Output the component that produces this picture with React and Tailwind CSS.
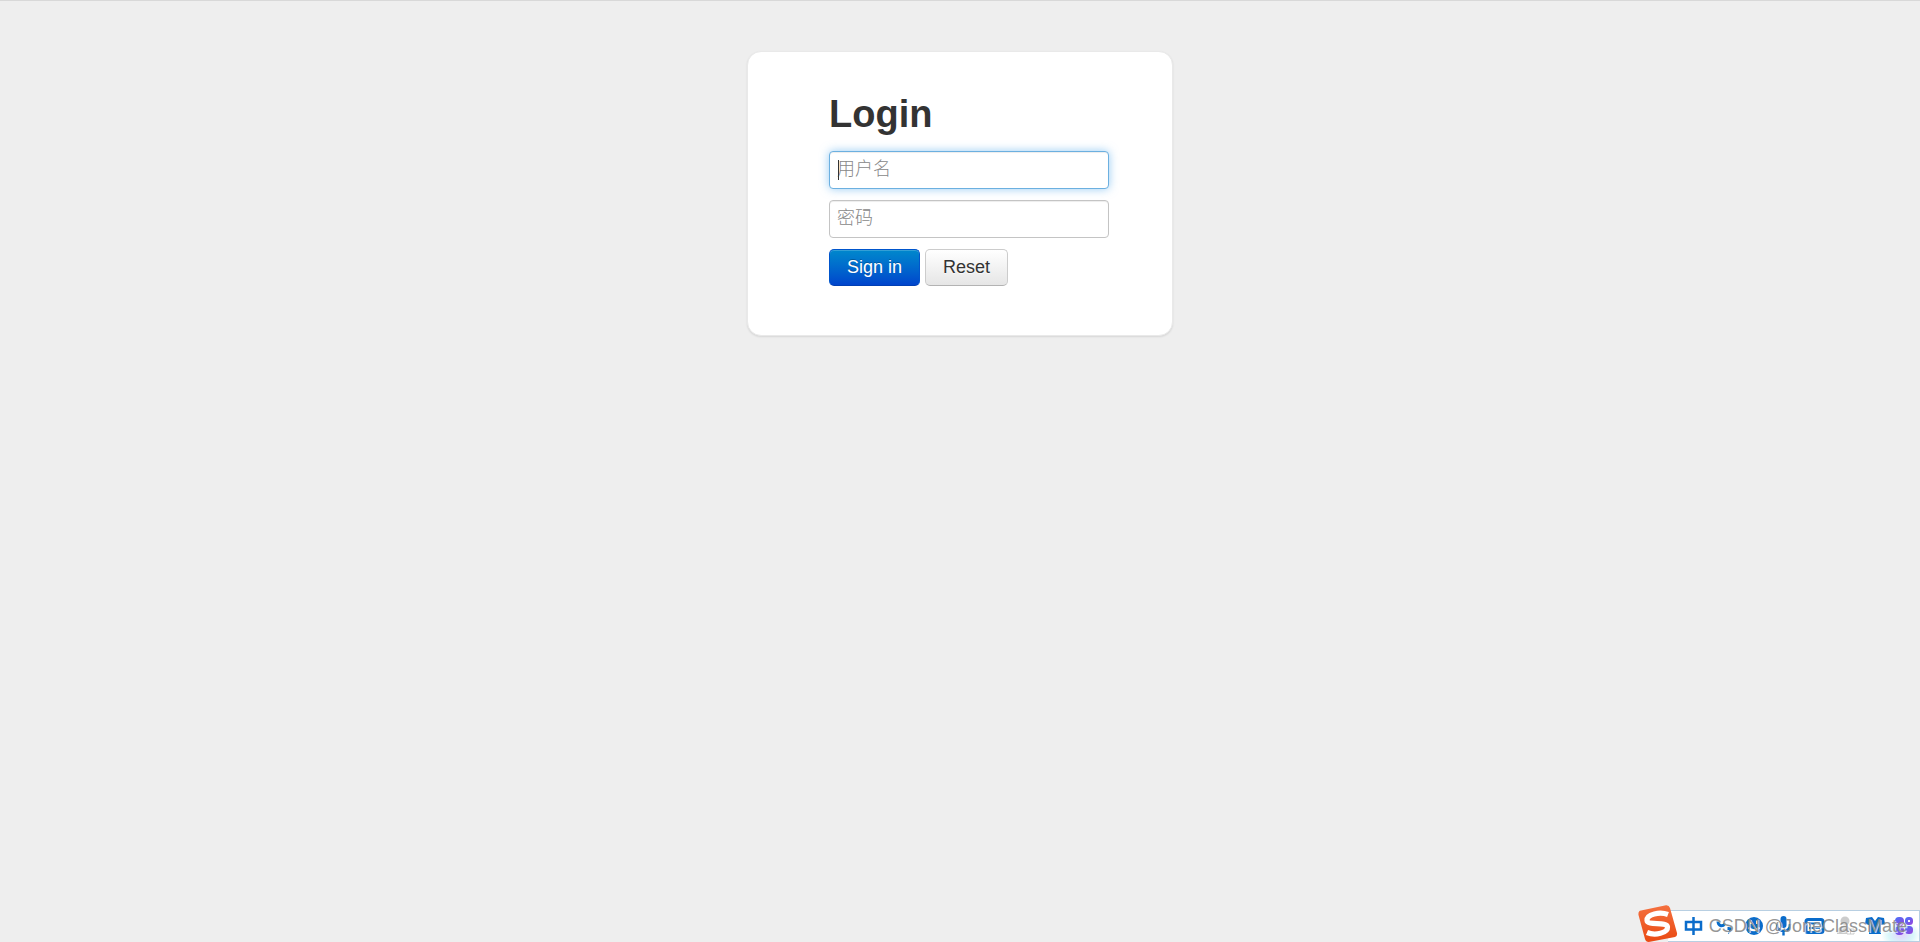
import { useState } from "react";

const fieldClass =
  "block w-full h-[38px] rounded-[4px] border border-[#c4c4c4] bg-white px-[7px] pb-[2px] text-[18px] leading-[24px] text-[#555555] placeholder:font-light placeholder:text-[#888888] caret-transparent shadow-[inset_0_1px_1px_rgba(0,0,0,0.075)] outline-none focus:border-[#6cb0e0] focus:shadow-[inset_0_1px_1px_rgba(0,0,0,0.075),0_0_10px_rgba(82,168,236,0.6)]";

function SogouLogo() {
  return (
    <svg viewBox="0 0 40 37" className="relative z-10 h-[37px] w-[40px] shrink-0" aria-hidden="true">
      <defs>
        <linearGradient id="sogou" x1="0" y1="0" x2="0" y2="1">
          <stop offset="0" stopColor="#f4703f" />
          <stop offset="1" stopColor="#ea4a13" />
        </linearGradient>
      </defs>
      <path d="M3 5.5 L28 0.3 Q31 0 32 3 L39 28 Q39.500 31 37 32 L12 36.8 Q8 37.500 7 34 L0.5 10 Q0 6 3 5.500Z" fill="url(#sogou)" />
      <path d="M30 9.500C22 6.500 8.500 9 9 15.500C9.500 21 29 16 29.500 22C30 28 17 31 9 27.500" fill="none" stroke="#fff" strokeWidth="5.200" />
    </svg>
  );
}

function InputBarIcons() {
  return (
    <svg viewBox="0 0 240 30" className="h-[30px] w-[240px] shrink-0" aria-hidden="true">
      <defs>
        <linearGradient id="apps" x1="0" y1="0" x2="1" y2="1">
          <stop offset="0" stopColor="#536cf5" />
          <stop offset="1" stopColor="#8a4be0" />
        </linearGradient>
        <radialGradient id="glow">
          <stop offset="0" stopColor="#e3d3fb" />
          <stop offset="0.6" stopColor="#d8f6fa" />
          <stop offset="1" stopColor="#ffffff" />
        </radialGradient>
      </defs>
      <ellipse cx="222" cy="24" rx="20" ry="14" fill="url(#glow)" />
      <path d="M7 11H22V18.500H7Z M14.500 6V24" fill="none" stroke="#0a6ccb" strokeWidth="2.500" />
      <path d="M39 10 C39 15 43 16 46 13" fill="none" stroke="#0a6ccb" strokeWidth="3" />
      <path d="M48.500 16 h4 q1 5 -3.500 7 v-2 q1.500 -1 1 -2 h-1.500Z" fill="#0a6ccb" />
      <circle cx="75" cy="15" r="9" fill="#0a6ccb" />
      <path d="M72 9.500V13 M78 9.500V13 M69.500 16.500Q75 22 80.500 16.500" fill="none" stroke="#fff" strokeWidth="2" />
      <rect x="101.500" y="5" width="6" height="12" rx="3" fill="#0a6ccb" />
      <path d="M98 13Q98 20 104.500 20Q111 20 111 13 M104.500 20V24.500" fill="none" stroke="#0a6ccb" strokeWidth="2.400" />
      <rect x="127" y="8.500" width="17" height="13" rx="2" fill="none" stroke="#0a6ccb" strokeWidth="3" />
      <path d="M130 12.500H141 M130 17H141" stroke="#0a6ccb" strokeWidth="2" />
      <g fill="#cccccc">
        <circle cx="166" cy="10" r="4.500" />
        <path d="M158 23Q157 15 166 15Q170 15 171 18V23Z" />
      </g>
      <path d="M168 18H175V23H168Z M171.500 18V23" fill="#fff" stroke="#cccccc" />
      <path d="M187 7L193 6L196 10L199 6L205 7L206 13L202 14V23H190V14L186 13Z" fill="#0a6ccb" />
      <g fill="none" stroke="url(#apps)" strokeWidth="3">
        <rect x="217.500" y="7.500" width="6" height="6" rx="2.500" fill="url(#apps)" />
        <rect x="227.500" y="7.500" width="5" height="5" rx="2" />
        <rect x="217.500" y="16.500" width="6" height="6" rx="2.500" fill="url(#apps)" />
        <rect x="227.500" y="16.500" width="5" height="5" rx="2" fill="url(#apps)" />
      </g>
    </svg>
  );
}

export default function App() {
  const [username, setUsername] = useState("");
  const [password, setPassword] = useState("");

  const handleReset = () => {
    setUsername("");
    setPassword("");
  };

  return (
    <div className="min-h-screen border-t border-[#d8d8d8] bg-[#eeeeee] px-5 pt-[50px] font-['Liberation_Sans','Noto_Sans_CJK_SC',sans-serif] text-[#333333]">
      <main className="mx-auto w-full max-w-[426px] rounded-[14px] border border-[#e9e9e9] bg-white pt-[37px] pr-[63px] pb-[49px] pl-[81px] shadow-[0_1px_2px_rgba(0,0,0,0.1)]">
        <form onSubmit={(e) => e.preventDefault()} onReset={handleReset}>
          <h1 className="mb-[12px] text-[38px] leading-[50px] font-bold">Login</h1>
          <div className="flex flex-col gap-[11px]">
            <div className="group relative">
              <input
                type="text"
                aria-label="用户名"
                placeholder="用户名"
                autoFocus
                value={username}
                onChange={(e) => setUsername(e.target.value)}
                className={`${fieldClass} not-placeholder-shown:caret-[#333333]`}
              />
              {/* caret of the empty focused field */}
              {!username && (
                <span className="pointer-events-none absolute inset-y-[9px] left-[9px] hidden w-px bg-[#333333] group-focus-within:block" />
              )}
            </div>
            <input
              type="password"
              aria-label="密码"
              placeholder="密码"
              value={password}
              onChange={(e) => setPassword(e.target.value)}
              className={`${fieldClass} focus:caret-[#333333]`}
            />
            <div className="flex gap-[5px]">
              <button
                type="submit"
                className="h-[37px] rounded-[5px] border border-[#0055cc] border-b-[#003fb3] bg-linear-to-b from-[#0088cc] to-[#0044cc] px-[17px] pb-[2px] text-[18px] leading-[24px] text-white shadow-[inset_0_1px_0_rgba(255,255,255,0.2)] text-shadow-[0_-1px_0_rgba(0,0,0,0.25)]"
              >
                Sign in
              </button>
              <button
                type="reset"
                className="h-[37px] rounded-[5px] border border-[#cccccc] border-b-[#b3b3b3] bg-linear-to-b from-white to-[#e6e6e6] px-[17px] pb-[2px] text-[18px] leading-[24px] text-[#333333] shadow-[inset_0_1px_0_rgba(255,255,255,0.2)] text-shadow-[0_1px_1px_rgba(255,255,255,0.75)]"
              >
                Reset
              </button>
            </div>
          </div>
        </form>
      </main>

      {/* input method bar, floats over the page corner */}
      <div className="fixed right-0 bottom-0 flex items-end pl-[10px]">
        <SogouLogo />
        <div className="relative -ml-[10px] flex items-center border-y border-r border-[#b8cfe2] bg-white pl-[11px]">
          <InputBarIcons />
          <span className="absolute right-[12px] text-[18px] leading-[24px] whitespace-nowrap text-[#888888]/90 text-shadow-[1px_1px_0_rgba(255,255,255,0.7)]">
            CSDN @JoneClassMate
          </span>
        </div>
      </div>
    </div>
  );
}
